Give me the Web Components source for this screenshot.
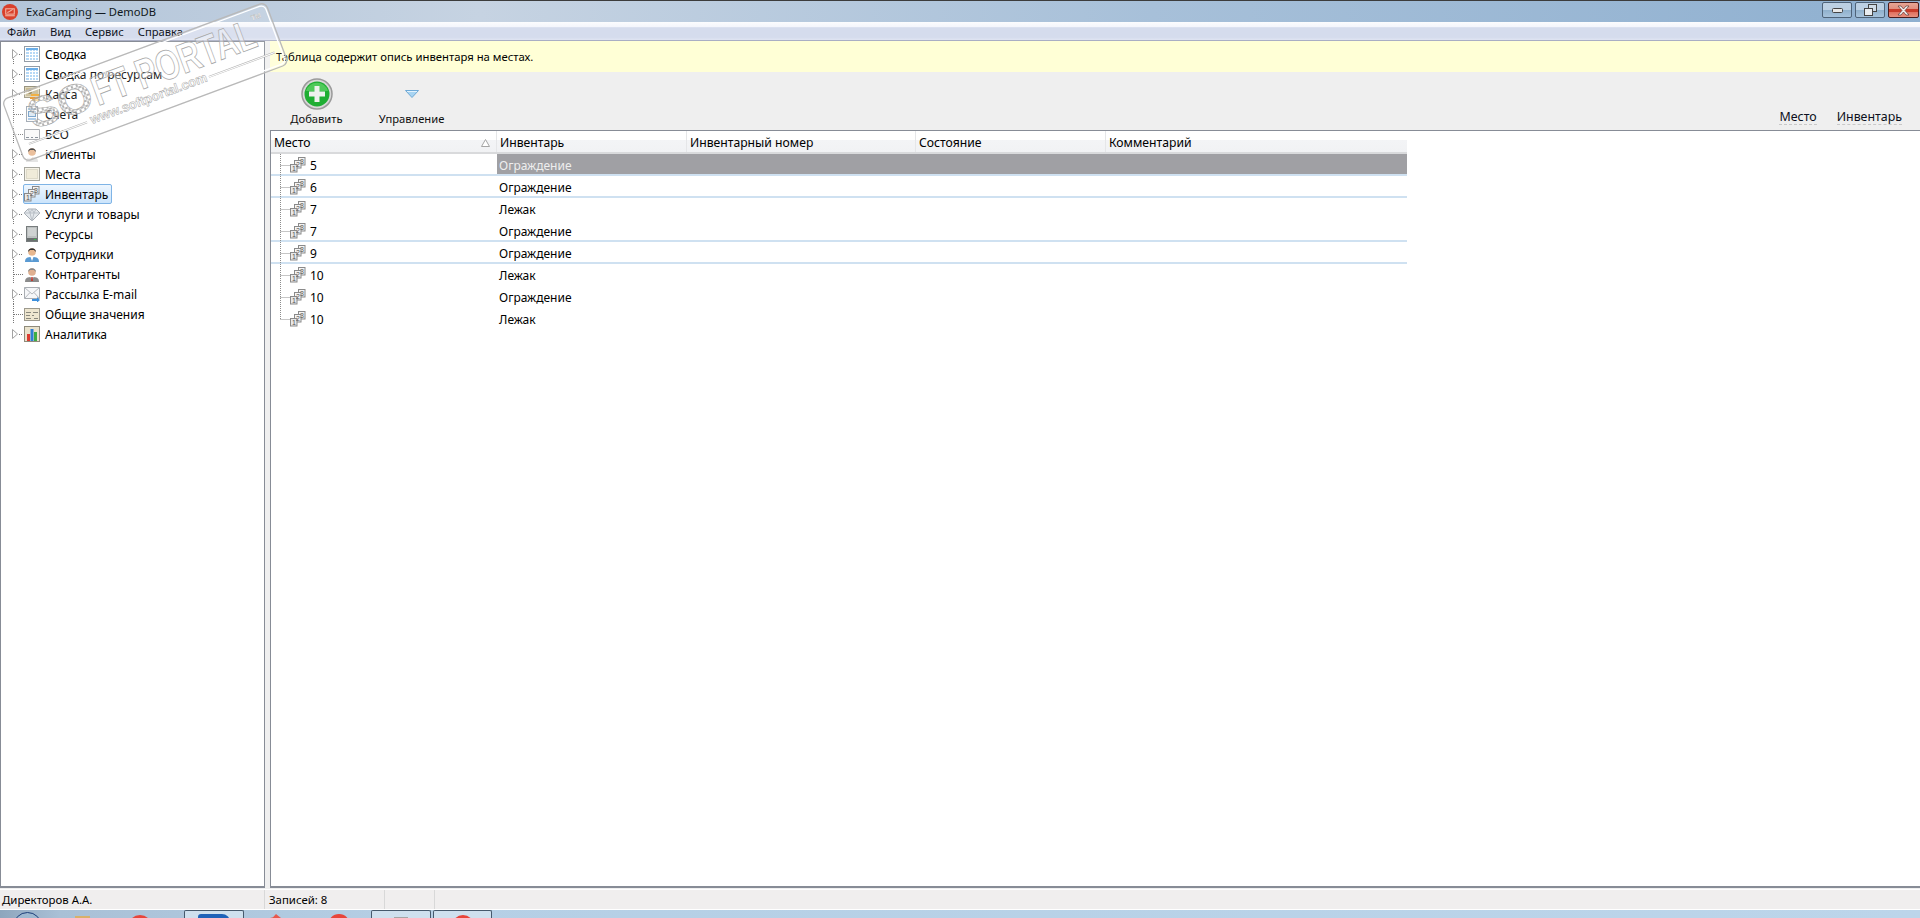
<!DOCTYPE html>
<html lang="ru">
<head>
<meta charset="UTF-8">
<title>ExaCamping — DemoDB</title>
<style>
    html, body { margin: 0; height: 100%; overflow: hidden; background: #efefef; }
    body { font: 12px "Noto Sans", "Open Sans", sans-serif; color: #000; }
</style>
</head>
<body>
<exa-app></exa-app>
<script>
    // маленькие иконки 16x16
    const DIGITS = `<g font-family="Liberation Sans, sans-serif" font-size="7" fill="#555"><text x="2" y="14">1</text><text x="6" y="10">2</text><text x="10" y="7">3</text></g>`;
    const ICONS = {
        table: `<rect x=".5" y=".5" width="15" height="15" fill="#fff" stroke="#939ca6"/><rect x="2" y="2" width="12" height="12" fill="#b5d8f6"/><path d="M2 5.500h12M2 8.500h12M2 11.500h12M5.500 2v12M8.500 2v12M11.500 2v12" stroke="#fff"/><rect x="2" y="2" width="12" height="2" fill="#6aaee9"/>`,
        cash: `<rect x=".5" y=".5" width="15" height="11" fill="#dfd7bb" stroke="#98937f"/><rect x="2" y="2" width="12" height="8" fill="#c7ba94"/><circle cx="6" cy="6" r="2" fill="#8d7b4c"/><rect x="7" y="8" width="8" height="2" fill="#f0a52a"/><rect x="6" y="11" width="8" height="2" fill="#e8901c"/><rect x="8" y="13" width="7" height="2" fill="#f0b040"/>`,
        doc: `<rect x="2.500" y=".5" width="11" height="15" fill="#fbfbfb" stroke="#9aa3ad"/><path d="M4 3h8M4 13h8" stroke="#4b8fd0"/><rect x="4.500" y="5.500" width="7" height="5" fill="#dbe8f3" stroke="#6f9cc6"/>`,
        bso: `<path d="M.5 3.500h15v10h-15z" fill="#fafafa" stroke="#a2a6ab"/><path d="M2 11.500h3M7 11.500h2M11 11.500h3" stroke="#7d8690"/>`,
        client: `<path d="M2 16c0-4 2-5 6-5s6 1 6 5z" fill="#e4e4e4"/><circle cx="8" cy="6" r="3.800" fill="#e7b78f"/><path d="M4.200 6C3.600 1 12.400 1 11.800 6L10 4H6z" fill="#333"/><path d="M6.500 11h3L8 13z" fill="#d2a079"/>`,
        place: `<rect x=".5" y="1.500" width="15" height="13" fill="#f6f3e8" stroke="#a6a69e"/><rect x="2.500" y="3.500" width="11" height="9" fill="#f0ebd9" stroke="#c6c2ae" stroke-dasharray="1 1"/>`,
        stock: `<rect x="8.500" y=".5" width="6.500" height="7.500" fill="#f4f4f4" stroke="#8a8a8a"/><rect x="4.500" y="3.500" width="6.500" height="7.500" fill="#f4f4f4" stroke="#8a8a8a"/><rect x=".5" y="7.500" width="6.500" height="7.500" fill="#e8e8e8" stroke="#8a8a8a"/>${DIGITS}`,
        gem: `<path d="M4 3h8l4 4-8 8-8-8z" fill="#e4e8ec" stroke="#a6acb3"/><path d="M0 7h16M4 3l2 4 2 8 2-8 2-4M6 7l2-4 2 4" stroke="#b9bfc6" fill="none"/>`,
        server: `<rect x="2.500" y=".5" width="11" height="15" fill="#bcc0c0" stroke="#777c7d"/><path d="M4 3h8M4 5h8M4 7h8M4 9h8" stroke="#e2e4e4"/><rect x="3" y="12" width="10" height="3" fill="#6b7070"/><rect x="10" y="13" width="2" height="1" fill="#39c24b"/>`,
        staff: `<path d="M1 16c0-4 2-5 7-5s7 1 7 5z" fill="#5a9ad2"/><circle cx="8" cy="6" r="3.800" fill="#e7b78f"/><path d="M4.200 6C3.600 1 12.400 1 11.800 6L10 4H6z" fill="#333"/><path d="M6.500 11h3L8 15z" fill="#fff"/>`,
        partner: `<path d="M1 16c0-4 2-5 7-5s7 1 7 5z" fill="#8b8b8b"/><circle cx="8" cy="6" r="3.800" fill="#e0b090"/><path d="M4.200 6C3.600 1 12.400 1 11.800 6L10 4H6z" fill="#888"/><path d="M6.500 11h3L8 15z" fill="#fff"/><path d="M7.300 11h1.400l.3 4H7z" fill="#c03a30"/>`,
        mail: `<path d="M.5 1.500h15v11H.5z" fill="#f6f7f9" stroke="#a9adb2"/><path d="M.5 1.500 8 8l7.500-6.500M.5 12.500 6 6.500M15.500 12.500 10 6.500" fill="none" stroke="#b4b8bd"/><path d="M8 13h5v-2l3 3-3 2.500V15H8z" fill="#3d8fdc"/>`,
        common: `<rect x=".5" y="2.500" width="15" height="12" fill="#eee6cf" stroke="#9d9a8e"/><path d="M2 6.500h5M9 6.500h5M2 9.500h4M8 9.500h2M2 12.500h5M10 12.500h4" stroke="#8a887d"/>`,
        chart: `<rect x=".5" y=".5" width="15" height="15" fill="#e9e2cc" stroke="#8f8b7b"/><rect x="3" y="8" width="3" height="7" fill="#dc3c30"/><rect x="6.500" y="3" width="3" height="12" fill="#2e7fd4"/><rect x="10" y="6" width="3" height="9" fill="#3cae44"/>`
    };
    const icon = name => `<svg width="16" height="16" viewBox="0 0 16 16">${ICONS[name]}</svg>`;

    class ExaTitlebar extends HTMLElement {
        connectedCallback() {
            this.attachShadow({mode: 'open'});
            this.shadowRoot.innerHTML = `
            <style>
                :host { display: flex; align-items: center; height: 21px; border-top: 1px solid #3c3c3c; font-size: 11.200px;
                    background: linear-gradient(90deg, #b3c5d9 0, #c6d3e2 25%, #a7c0d9 60%, #8fb0d0 100%); }
                .logo { margin: 0 8px 0 2px; }
                .name { flex: 1; color: #101820; }
                .btns { display: flex; gap: 3px; margin: 0 1px 3px 0; }
                .btn { width: 28px; height: 14px; border: 1px solid #4e6379; border-radius: 2px; display: flex; align-items: center; justify-content: center;
                    background: linear-gradient(#bcd0e3 0, #bcd0e3 50%, #8fb0cc 50%, #a7c3dc 100%); }
                .btn.close { width: 29px; border-color: #4a1c1c; background: linear-gradient(#e6a594 0, #e09080 40%, #c83c2a 40%, #c83c2a 65%, #e0705e 65%, #e8907e 100%); }
            </style>
            <svg class="logo" width="16" height="16" viewBox="0 0 15 15"><circle cx="7.500" cy="7.500" r="7.500" fill="#d9402c"/><rect x="3.500" y="4.500" width="8" height="5" fill="none" stroke="#f3b4a4"/><path d="M3 11h9" stroke="#f3b4a4"/><path d="M5 8l2-1 3-2" stroke="#f3b4a4" fill="none"/></svg>
            <span class="name"><slot></slot></span>
            <div class="btns">
                <div class="btn"><svg width="11" height="5"><rect x=".5" y=".5" width="10" height="4" rx="1" fill="#e8e8e8" stroke="#444"/></svg></div>
                <div class="btn"><svg width="13" height="12"><rect x="4.500" y=".5" width="8" height="7" fill="#cfdbe6" stroke="#444"/><rect x=".5" y="4.500" width="8" height="7" fill="#e8ecf0" stroke="#444"/></svg></div>
                <div class="btn close"><svg width="15" height="11"><path d="M2 1h3l2.500 3L10 1h3L9 5.500 13 10h-3L7.500 7 5 10H2l4-4.500z" fill="#f4f0ee" stroke="#5a3a38" stroke-width=".7"/></svg></div>
            </div>`;
        }
    }

    class ExaMenubar extends HTMLElement {
        connectedCallback() {
            this.attachShadow({mode: 'open'});
            this.shadowRoot.innerHTML = `
            <style>
                :host { display: flex; gap: 14px; height: 18px; padding-left: 7px; align-items: center; border-bottom: 1px solid #a9aec4; font-size: 11.200px;
                    background: linear-gradient(#fbfcfe 0, #f4f6fc 25%, #d5dced 32%, #d5dced 85%, #e0e5f2 100%); }
                ::slotted(span) { color: #10141c; }
            </style>
            <slot></slot>`;
        }
    }

    class TreeItem extends HTMLElement {
        connectedCallback() {
            const kids = this.hasAttribute('kids');
            const last = this.hasAttribute('last');
            const vert = kids ? `M12.500 15V20` : `M12.500 0V20`;
            const lines = `<path d="${last ? '' : vert}M${kids ? 18 : 13} 10.500H22" stroke="#777" stroke-dasharray="1 1" fill="none"/>`;
            const tri = kids ? `<path d="M11.500 5.500l5 4.500-5 4.500z" fill="#fff" stroke="#a3a3a3"/>` : '';
            this.attachShadow({mode: 'open'});
            this.shadowRoot.innerHTML = `
            <style>
                :host { display: flex; height: 20px; align-items: center; }
                .entry { display: flex; align-items: center; gap: 5px; height: 18px; border: 1px solid transparent; border-radius: 2px; padding-right: 3px; }
                :host([selected]) .entry { border-color: #7fb4e6; background: linear-gradient(#eef6fe, #cbe4fb); }
                svg.lines { flex: none; }
            </style>
            <svg class="lines" width="22" height="20">${lines}${tri}</svg>
            <div class="entry">${icon(this.getAttribute('icon'))}<slot></slot></div>`;
        }
    }

    class NavTree extends HTMLElement {
        connectedCallback() {
            this.attachShadow({mode: 'open'});
            this.shadowRoot.innerHTML = `
            <style>
                :host { display: block; box-sizing: border-box; width: 265px; flex: none; padding-top: 2px; background: #fff; border: 1px solid #878c96; border-bottom-width: 2px; }
            </style>
            <slot></slot>`;
        }
    }

    class ToolButton extends HTMLElement {
        connectedCallback() {
            this.attachShadow({mode: 'open'});
            this.shadowRoot.innerHTML = `
            <style>
                :host { display: flex; flex-direction: column; align-items: center; width: 95px; font-size: 11.200px; }
                .ico { height: 36px; display: flex; align-items: center; justify-content: center; }
                .lbl { margin-top: -1px; line-height: 16px; color: #101010; }
            </style>
            <div class="ico"><slot name="ico"></slot></div>
            <div class="lbl"><slot></slot></div>`;
        }
    }

    class ToolBar extends HTMLElement {
        connectedCallback() {
            this.attachShadow({mode: 'open'});
            this.shadowRoot.innerHTML = `
            <style>
                :host { display: flex; height: 58px; box-sizing: border-box; padding-top: 4px; justify-content: space-between; background: #efefef; }
                .left { display: flex; margin-left: -1px; }
                .right { display: flex; gap: 20px; align-self: flex-end; padding: 0 18px 5px 0; }
                ::slotted(a) { border-bottom: 1px dashed #c8c8c8; line-height: 15px; color: #0c1020; font-size: 12.400px; }
            </style>
            <div class="left"><slot name="tools"></slot></div>
            <div class="right"><slot name="links"></slot></div>`;
        }
    }

    class InfoBar extends HTMLElement {
        connectedCallback() {
            this.attachShadow({mode: 'open'});
            this.shadowRoot.innerHTML = `
            <style>
                :host { display: flex; align-items: center; height: 31px; padding-left: 6px; background: #ffffd6; font-size: 11.300px; }
            </style>
            <slot></slot>`;
        }
    }

    // колонки таблицы
    const GRID_COLS = '226px 190px 229px 190px 301px';

    class GridHeader extends HTMLElement {
        connectedCallback() {
            this.attachShadow({mode: 'open'});
            const sort = `<svg width="9" height="8"><path d="M4.500 .5 8.500 7.500H.5z" fill="#fff" stroke="#a5a5a5"/></svg>`;
            this.shadowRoot.innerHTML = `
            <style>
                :host { display: grid; grid-template-columns: ${GRID_COLS}; width: 1136px; height: 23px; box-sizing: border-box; border-bottom: 2px solid #d9dadc; font-size: 12.200px;
                    background: linear-gradient(#fff 0, #fff 9px, #f3f4f6 9px, #f1f2f4 100%); }
                .c { display: flex; align-items: center; justify-content: space-between; padding: 2px 6px 0 3px; box-sizing: border-box; border-right: 1px solid #e5e6e8; height: 21px; }
            </style>
            <div class="c"><span>Место</span>${sort}</div>
            <div class="c">Инвентарь</div>
            <div class="c">Инвентарный номер</div>
            <div class="c">Состояние</div>
            <div class="c" style="border-right:0">Комментарий</div>`;
        }
    }

    class GridRow extends HTMLElement {
        connectedCallback() {
            const last = this.hasAttribute('last');
            this.attachShadow({mode: 'open'});
            this.shadowRoot.innerHTML = `
            <style>
                :host { display: grid; grid-template-columns: ${GRID_COLS}; width: 1136px; height: 22px; }
                :host([line]) .c { box-shadow: inset 0 -2px #cfe1f1; }
                .c { box-sizing: border-box; height: 22px; display: flex; align-items: center; }
                .place svg.tree { margin-left: 9px; flex: none; }
                .place svg { flex: none; }
                .place .num { margin-left: 4px; }
                .item { padding-left: 2px; }
                :host([selected]) .c:not(.place) { background: #a0a0a4; color: #eee; box-shadow: none; border-bottom: 2px solid #cfe1f1; padding-top: 2px; }
            </style>
            <div class="c place">
                <svg class="tree" width="10" height="22"><path d="M.5 0V${last ? 11.5 : 22}M.5 11.500H10" stroke="#8c8c8c" stroke-dasharray="1 1" fill="none"/></svg>
                ${icon('stock')}<span class="num">${this.getAttribute('place')}</span>
            </div>
            <div class="c item">${this.getAttribute('item')}</div>
            <div class="c"></div><div class="c"></div><div class="c"></div>`;
        }
    }

    class DataGrid extends HTMLElement {
        connectedCallback() {
            this.attachShadow({mode: 'open'});
            this.shadowRoot.innerHTML = `
            <style>
                :host { display: block; flex: 1; background: #fff; border: 1px solid #878c96; border-bottom-width: 2px; border-right: 0; }
            </style>
            <slot></slot>`;
        }
    }

    class StatusBar extends HTMLElement {
        connectedCallback() {
            this.attachShadow({mode: 'open'});
            this.shadowRoot.innerHTML = `
            <style>
                :host { display: grid; grid-template-columns: 265px 120px 50px 1fr; height: 19px; margin-top: 1px; background: #f0eeee; border-top: 1px solid #fff; border-bottom: 1px solid #fff; font-size: 11.400px; }
                ::slotted(span) { display: flex; align-items: center; padding-left: 2px; border-right: 1px solid #d8d8d8; overflow: hidden; }
            </style>
            <slot></slot>`;
        }
    }

    class TaskBar extends HTMLElement {
        connectedCallback() {
            this.attachShadow({mode: 'open'});
            const red = w => `<i class="dot" style="width:${w}px;height:${w}px"></i>`;
            this.shadowRoot.innerHTML = `
            <style>
                :host { display: flex; height: 8px; overflow: hidden; background: linear-gradient(90deg, #8ea6bd 0, #a9c0d6 60px, #b5cfe5 400px, #bcd5ea 100%); }
                .tab { box-sizing: border-box; height: 10px; border: 1px solid #46596c; border-bottom: 0; border-radius: 2px 2px 0 0; background: #cfe0ee; display: flex; justify-content: center; padding-top: 3px; gap: 4px; }
                .gap { box-sizing: border-box; display: flex; }
                .orb { width: 29px; height: 29px; margin: 2px 0 0 13px; border: 1px solid #1d3f7a; border-radius: 50%; background: #9db8d0; box-sizing: border-box; flex: none; }
                .dot { display: block; border-radius: 50%; background: #e8453a; flex: none; }
                .org { width: 15px; height: 6px; margin: 6px 0 0 33px; background: #d8b06a; flex: none; }
                .win { width: 32px; height: 12px; background: #1f62b8; border-radius: 3px 8px 0 0; }
                .gry { width: 14px; height: 10px; margin-top: 3px; background: #a5a5a5; }
                .mark { width: 15px; height: 8px; margin: 4px 46px 0 23px; background: #e8584c; clip-path: polygon(0 60%, 40% 40%, 60% 0, 80% 30%, 100% 60%, 100% 100%, 0 100%); flex: none; }
            </style>
            <div class="orb"></div>
            <div class="gap" style="width:142px"><i class="org"></i><i class="dot" style="width:24px;height:24px;margin:5px 0 0 38px"></i></div>
            <div class="tab" style="width:60px"><i class="win"></i></div>
            <div class="gap" style="width:127px"><i class="mark"></i><i class="dot" style="width:22px;height:22px;margin-top:4px;"></i></div>
            <div class="tab" style="width:60px;margin-right:2px"><i class="gry"></i></div>
            <div class="tab" style="width:59px;padding-top:4px">${red(22)}</div>`;
        }
    }

    // штамп-водяной знак поверх окна
    class SoftStamp extends HTMLElement {
        connectedCallback() {
            this.attachShadow({mode: 'open'});
            this.shadowRoot.innerHTML = `
            <style>
                :host { position: absolute; left: 0; top: 0; width: 300px; height: 175px; pointer-events: none; display: block; }
                text { font-family: "Liberation Sans", sans-serif; }
            </style>
            <svg width="300" height="175" viewBox="0 0 300 175">
                <defs>
                    <pattern id="dots" width="5" height="5" patternUnits="userSpaceOnUse">
                        <rect x=".5" y=".5" width="4" height="4" rx="1" fill="#fff" fill-opacity=".5" stroke="#9c9c9c" stroke-width=".8"/>
                    </pattern>
                </defs>
                <g transform="translate(2 100) rotate(-20.4)">
                    <rect x="0" y="0" width="281" height="66" rx="6" fill="#fff" fill-opacity=".12" stroke="#b9b9b9" stroke-width="1.300"/>
                    <rect x="2" y="2" width="277" height="62" rx="5" fill="none" stroke="#fff" stroke-width="1.300"/>
                    <text x="20" y="39" font-size="42" font-weight="700" fill="url(#dots)" stroke="#a6a6a6" stroke-width=".5" textLength="66" lengthAdjust="spacingAndGlyphs">SO</text>
                    <text x="88" y="39" font-size="42" font-weight="700" fill="#fff" fill-opacity=".35" stroke="#a6a6a6" stroke-width=".8" textLength="172" lengthAdjust="spacingAndGlyphs">FT PORTAL</text>
                    <text x="262" y="13" font-size="7" font-weight="700" fill="#fff" stroke="#aaa" stroke-width=".3">TM</text>
                    <text x="76" y="54" font-size="13" font-weight="700" fill="#fff" fill-opacity=".6" stroke="#a8a8a8" stroke-width=".5">www.softportal.com</text>
                    <path d="M10 50.500H72M202 50.500H272" stroke="#b5b5b5" stroke-width="2" fill="none"/>
                    <path d="M10 50.500H72M202 50.500H272" stroke="#fff" stroke-width="1" fill="none"/>
                </g>
            </svg>`;
        }
    }

    class ExaApp extends HTMLElement {
        connectedCallback() {
            this.attachShadow({mode: 'open'});
            const tree = [
                ['table', 'Сводка', 1], ['table', 'Сводка по ресурсам', 1], ['cash', 'Касса', 1], ['doc', 'Счета', 0], ['bso', 'БСО', 0],
                ['client', 'Клиенты', 1], ['place', 'Места', 1], ['stock', 'Инвентарь', 1], ['gem', 'Услуги и товары', 1], ['server', 'Ресурсы', 1],
                ['staff', 'Сотрудники', 1], ['partner', 'Контрагенты', 0], ['mail', 'Рассылка E-mail', 1], ['common', 'Общие значения', 0], ['chart', 'Аналитика', 1]
            ].map(([ic, label, kids], i, all) => `<tree-item icon="${ic}" ${kids ? 'kids' : ''} ${i == all.length - 1 ? 'last' : ''} ${label == 'Инвентарь' ? 'selected' : ''}>${label}</tree-item>`).join('');
            const rows = [
                ['5', 'Ограждение', 'selected line'], ['6', 'Ограждение', 'line'], ['7', 'Лежак', ''], ['7', 'Ограждение', 'line'],
                ['9', 'Ограждение', 'line'], ['10', 'Лежак', ''], ['10', 'Ограждение', ''], ['10', 'Лежак', 'last']
            ].map(([p, it, flags]) => `<grid-row place="${p}" item="${it}" ${flags}></grid-row>`).join('');
            this.shadowRoot.innerHTML = `
            <style>
                :host { display: flex; flex-direction: column; position: relative; width: 1920px; height: 918px; overflow: hidden; }
                .body { flex: 1; display: flex; gap: 5px; min-height: 0; }
                .right { flex: 1; display: flex; flex-direction: column; min-width: 0; }
            </style>
            <exa-titlebar>ExaCamping — DemoDB</exa-titlebar>
            <exa-menubar><span>Файл</span><span>Вид</span><span>Сервис</span><span>Справка</span></exa-menubar>
            <div class="body">
                <nav-tree>${tree}</nav-tree>
                <div class="right">
                    <info-bar>Таблица содержит опись инвентаря на местах.</info-bar>
                    <tool-bar>
                        <tool-button slot="tools">
                            <svg slot="ico" width="32" height="32" viewBox="0 0 32 32"><circle cx="16" cy="16" r="15" fill="#d8d8d8" stroke="#9a9a9a" stroke-width="1.500"/><circle cx="16" cy="16" r="12.500" fill="#1fae33"/><path d="M5 13a11.500 11.500 0 0 1 22 0z" fill="#4fc95a"/><path d="M13.500 8h5v5.500H24v5h-5.500V24h-5v-5.500H8v-5h5.500z" fill="#eef2ee"/></svg>
                            Добавить
                        </tool-button>
                        <tool-button slot="tools">
                            <svg slot="ico" width="14" height="8" viewBox="0 0 14 8"><path d="M.5.5h13L7 7.500z" fill="#a8d4f2" stroke="#6fa9d6"/><path d="M2 1.500h10" stroke="#e2f2fc"/></svg>
                            Управление
                        </tool-button>
                        <a slot="links">Место</a>
                        <a slot="links">Инвентарь</a>
                    </tool-bar>
                    <data-grid><grid-header></grid-header>${rows}</data-grid>
                </div>
            </div>
            <status-bar><span>Директоров А.А.</span><span style="padding-left:4px">Записей: 8</span><span></span><span style="border:0"></span></status-bar>
            <task-bar></task-bar>
            <soft-stamp></soft-stamp>`;
        }
    }

    customElements.define('exa-titlebar', ExaTitlebar);
    customElements.define('exa-menubar', ExaMenubar);
    customElements.define('tree-item', TreeItem);
    customElements.define('nav-tree', NavTree);
    customElements.define('tool-button', ToolButton);
    customElements.define('tool-bar', ToolBar);
    customElements.define('info-bar', InfoBar);
    customElements.define('grid-header', GridHeader);
    customElements.define('grid-row', GridRow);
    customElements.define('data-grid', DataGrid);
    customElements.define('status-bar', StatusBar);
    customElements.define('task-bar', TaskBar);
    customElements.define('soft-stamp', SoftStamp);
    customElements.define('exa-app', ExaApp);
</script>
</body>
</html>
